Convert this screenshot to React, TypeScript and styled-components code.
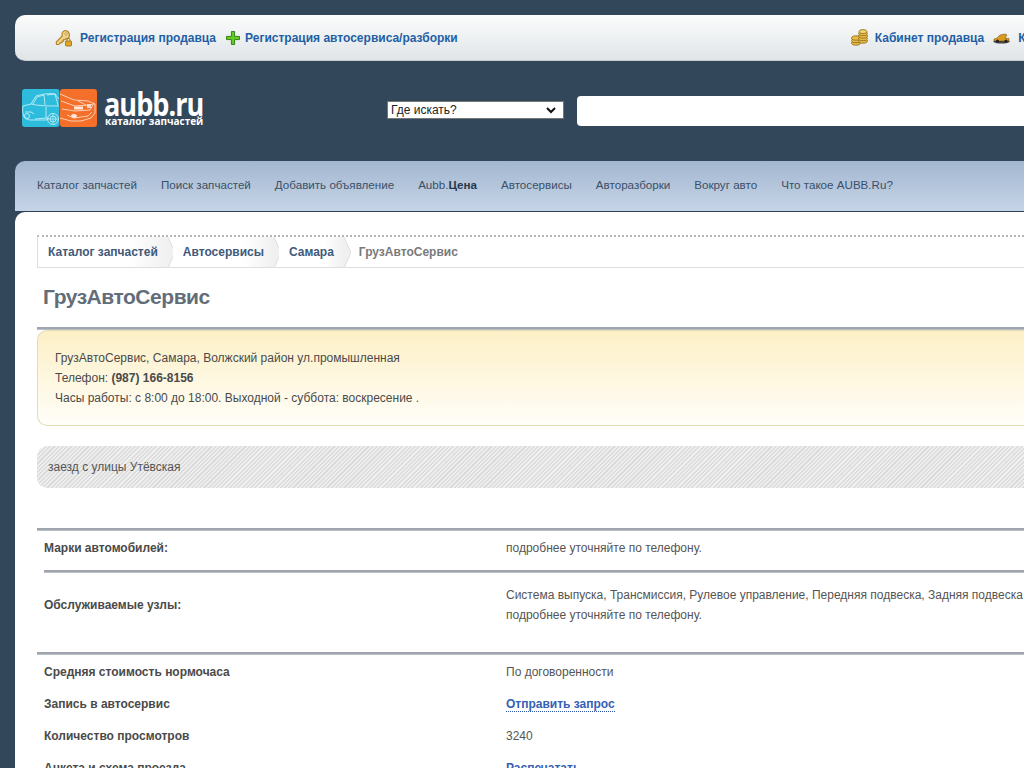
import styled, { createGlobalStyle } from "styled-components";

const Global = createGlobalStyle`
  html, body {
    margin: 0;
    padding: 0;
    height: 768px;
    overflow: hidden;
    background: #33475b;
    font-family: "Liberation Sans", Arial, sans-serif;
    font-size: 12px;
    color: #444;
  }
`;

const ruleBottom = `
  border-bottom: 1px solid #bcc1c8;
  box-shadow: inset 0 -2px 0 #9ea5af;
`;

const Page = styled.div`
  width: 1300px;
  padding-left: 15px;
  padding-top: 15px;
  box-sizing: border-box;
`;

const TopBar = styled.div`
  display: flex;
  align-items: center;
  height: 46px;
  box-sizing: border-box;
  padding-left: 40px;
  border-radius: 10px 0 0 10px;
  background: linear-gradient(#fbfcfc, #e1e5e8);
  border-bottom: 1px solid #c9cdd0;
`;

const TopLink = styled.a<{ $ml?: number; $gap?: number }>`
  display: flex;
  align-items: center;
  gap: ${(p) => p.$gap ?? 7}px;
  margin-left: ${(p) => p.$ml ?? 0}px;
  color: #1f5fa6;
  font-weight: bold;
  font-size: 12px;
  white-space: nowrap;
`;

const Header = styled.div`
  display: flex;
  align-items: flex-start;
  height: 100px;
`;

const LogoBox = styled.div`
  display: flex;
  align-items: flex-start;
  gap: 8px;
  margin: 28px 0 0 7px;
  width: 365px;
`;

const LogoText = styled.div`
  display: flex;
  flex-direction: column;
  color: #fff;
  font-family: "Open Sans", sans-serif;
  font-weight: 700;
`;

const LogoName = styled.div`
  font-size: 33px;
  line-height: 30px;
  letter-spacing: -1.2px;
  margin-left: -1px;
  transform: scaleX(0.82);
  transform-origin: left;
`;

const LogoSub = styled.div`
  font-size: 10px;
  line-height: 10px;
  margin-top: -3px;
  white-space: nowrap;
`;

const WhereSelect = styled.div`
  display: flex;
  align-items: center;
  justify-content: space-between;
  box-sizing: border-box;
  width: 177px;
  height: 18px;
  margin-top: 40px;
  padding: 0 7px 0 3px;
  background: #fff;
  border: 1px solid #767676;
  color: #222;
  font-size: 12px;
`;

const SearchInput = styled.div`
  width: 600px;
  height: 30px;
  margin: 35px 0 0 13px;
  background: #fff;
  border-radius: 4px;
`;

const Nav = styled.div`
  display: flex;
  align-items: center;
  gap: 24px;
  height: 51px;
  box-sizing: border-box;
  padding: 0 0 3px 22px;
  border-radius: 10px 0 0 0;
  background: linear-gradient(#a3b7d0, #c6d4e7);
  border-bottom: 1px solid #2f4358;
`;

const NavItem = styled.a`
  color: #3a5068;
  font-size: 11.62px;
  white-space: nowrap;
  b {
    color: #24384c;
  }
`;

const Content = styled.div`
  background: #fff;
  border-radius: 10px 0 0 0;
  padding: 23px 0 40px 22px;
`;

const Crumbs = styled.div`
  display: flex;
  align-items: stretch;
  height: 33px;
  box-sizing: border-box;
  border-top: 2px dotted #b5b5b5;
  border-bottom: 1px solid #dedede;
  border-left: 1px solid #dedede;
`;

const Crumb = styled.a<{ $current?: boolean }>`
  position: relative;
  display: flex;
  align-items: center;
  padding: 0 10px;
  margin-right: 5px;
  font-weight: bold;
  color: ${(p) => (p.$current ? "#7a7a7a" : "#41597a")};
  white-space: nowrap;
  background: ${(p) =>
    p.$current ? "none" : "linear-gradient(90deg, #fff 70%, #f0f0f0)"};
`;

const CrumbArrow = styled.svg`
  position: absolute;
  right: -7px;
  top: 0;
  width: 7px;
  height: 31px;
`;

const Title = styled.h1`
  margin: 0;
  padding: 17px 0 0 6px;
  height: 62px;
  box-sizing: border-box;
  font-size: 21px;
  line-height: 24px;
  letter-spacing: -0.47px;
  font-weight: bold;
  color: #636d79;
  ${ruleBottom}
`;

const Notice = styled.div`
  height: 96px;
  box-sizing: border-box;
  padding: 17px 17px 0;
  border: 1px solid #e2dcb6;
  border-right: none;
  border-radius: 10px 0 0 10px;
  background: linear-gradient(#fdf0c6, #fffef9);
  line-height: 20px;
  color: #4a4a4a;
`;

const Striped = styled.div`
  display: flex;
  align-items: center;
  margin-top: 20px;
  height: 42px;
  padding-left: 11px;
  border-radius: 10px 0 0 10px;
  color: #555;
  background: repeating-linear-gradient(
    135deg,
    #dcdcdc 0,
    #dcdcdc 1.5px,
    #efefef 1.5px,
    #efefef 3px
  );
`;

const Table = styled.div`
  margin-top: 40px;
  padding-top: 1px;
  border-top: 2px solid #9ea5af;
  box-shadow: inset 0 1px 0 #bcc1c8;
`;

const Row = styled.div<{
  $h: number;
  $rule?: "full" | "inner";
  $pt?: number;
  $pb?: number;
}>`
  display: grid;
  grid-template-columns: 462px 1fr;
  align-items: center;
  box-sizing: border-box;
  height: ${(p) => p.$h}px;
  padding-top: ${(p) => p.$pt ?? 0}px;
  padding-bottom: ${(p) => p.$pb ?? 0}px;
  margin-left: ${(p) => (p.$rule === "inner" ? 7 : 0)}px;
  padding-left: ${(p) => (p.$rule === "inner" ? 0 : 7)}px;
  ${(p) => (p.$rule ? ruleBottom : "")}
`;

const Label = styled.div`
  font-weight: bold;
  color: #4a4a4a;
`;

const Value = styled.div`
  line-height: 20px;
  color: #555;
  white-space: nowrap;
`;

const DottedLink = styled.a`
  color: #3560b4;
  font-weight: bold;
  border-bottom: 1px dotted #2c55a8;
`;

const PlainLink = styled.a`
  color: #3560b4;
  font-weight: bold;
`;

const KeyIcon = () => (
  <svg width="18" height="18" viewBox="0 0 18 18">
    <path d="M10 1.5a4.5 4.5 0 0 1 3 7.8l-1 .7-1-.5-1.2 1.2H8.5v1.5H7v1.5H5.5L4 15.5H1.5l-.2-2.5 6-6A4.5 4.5 0 0 1 10 1.5Z" fill="#f3d58a" stroke="#b8862c" strokeWidth="1.2" />
    <circle cx="11" cy="5" r="1.2" fill="#fff" stroke="#b8862c" strokeWidth=".8" />
    <rect x="10.5" y="12" width="6" height="5" rx=".8" fill="#e0a81f" stroke="#8f6a14" strokeWidth=".8" />
    <path d="M12 12v-1.2a1.5 1.5 0 0 1 3 0V12" fill="none" stroke="#8f6a14" strokeWidth=".9" />
  </svg>
);

const PlusIcon = () => (
  <svg width="14" height="14" viewBox="0 0 15 15">
    <path d="M5.8.5h3.4v5.3h5.3v3.4H9.2v5.3H5.8V9.2H.5V5.8h5.3Z" fill="#62cc22" stroke="#2f7d16" strokeWidth="1" />
  </svg>
);

const CoinsIcon = () => (
  <svg width="17" height="17" viewBox="0 0 17 17">
    <g fill="#e8bb45" stroke="#8c6a1c" strokeWidth=".8">
      <ellipse cx="5" cy="14" rx="4.4" ry="2.2" />
      <ellipse cx="5" cy="11.5" rx="4.4" ry="2.2" />
      <ellipse cx="5" cy="9" rx="4.4" ry="2.2" />
      <ellipse cx="12" cy="12" rx="4.4" ry="2.2" />
      <ellipse cx="12" cy="9.5" rx="4.4" ry="2.2" />
      <ellipse cx="12" cy="7" rx="4.4" ry="2.2" />
      <ellipse cx="12" cy="4.5" rx="4.4" ry="2.2" />
      <ellipse cx="12" cy="2.6" rx="4" ry="2" fill="#f5d675" />
    </g>
  </svg>
);

const CarIcon = () => (
  <svg width="17" height="12" viewBox="0 0 17 12">
    <ellipse cx="8.5" cy="9.5" rx="8.2" ry="2" fill="#444" />
    <path d="M1 7 4 6l3-3 5-1 2 1-2 3 4 .5V9H1Z" fill="#d99a1f" stroke="#6a4a10" strokeWidth=".5" />
    <circle cx="4.5" cy="9" r="1.5" fill="#222" />
    <circle cx="13" cy="9" r="1.5" fill="#222" />
  </svg>
);

const Logo = () => (
  <svg width="75" height="38" viewBox="0 0 75 38">
    <rect x="0" y="0" width="37.5" height="38" rx="3" fill="#2ebcdc" />
    <rect x="38" y="0" width="37" height="38" rx="3" fill="#f4702a" />
    <g fill="none" stroke="#d5f2f9" strokeWidth=".8">
      <path d="M1 17 9 15l5-8c6-2 14-3 19-2l4 5" />
      <path d="M9 15c8 2 18 2 28 2" />
      <path d="M11 15l4-7 7-2 1 10M25 6l8-1 3 11" />
      <path d="M1 17c-1 4 0 8 1 11 2 2 4 3 7 3h15l3-2" />
      <path d="M3 23h6l3 2M13 30l12-1M24 18v11" />
      <circle cx="5" cy="27" r="2.5" />
      <circle cx="31" cy="30" r="5.5" />
      <circle cx="31" cy="30" r="3" />
      <path d="M31 25v10M26 30h10" strokeWidth=".6" />
    </g>
    <g fill="none" stroke="#ffe6d6" strokeWidth=".8">
      <path d="M38 5 52 11l14 1 7 3v9l-4 5-10 3H49l-11-3" />
      <path d="M39 12l14 5 14-1 5-1M40 20l13 2 15-1 3-5" />
      <path d="M45 26l7 3 14-2 4-4" />
      <path d="M56 12l8 4" />
      <ellipse cx="52" cy="27" rx="2.6" ry="1.7" fill="#ffe6d6" />
    </g>
    <rect x="52" y="17.5" width="9" height="3" fill="#ffe6d6" />
    <rect x="65" y="15" width="4" height="4" fill="#ffe6d6" opacity=".85" />
  </svg>
);

const CrumbTip = () => (
  <CrumbArrow viewBox="0 0 7 31">
    <path d="M0 0 7 15.5 0 31Z" fill="#f0f0f0" />
    <path d="M0 0 7 15.5 0 31" fill="none" stroke="#dedede" />
  </CrumbArrow>
);

const navItems = [
  "Каталог запчастей",
  "Поиск запчастей",
  "Добавить объявление",
];
const navItemsAfter = [
  "Автосервисы",
  "Авторазборки",
  "Вокруг авто",
  "Что такое AUBB.Ru?",
];

export default function App() {
  return (
    <>
      <Global />
      <Page>
        <TopBar>
          <TopLink>
            <KeyIcon />
            Регистрация продавца
          </TopLink>
          <TopLink $ml={10} $gap={5}>
            <PlusIcon />
            Регистрация автосервиса/разборки
          </TopLink>
          <TopLink $ml={393}>
            <CoinsIcon />
            Кабинет продавца
          </TopLink>
          <TopLink $ml={9} $gap={8}>
            <CarIcon />
            Кабинет автосервиса
          </TopLink>
        </TopBar>
        <Header>
          <LogoBox>
            <Logo />
            <LogoText>
              <LogoName>aubb.ru</LogoName>
              <LogoSub>каталог запчастей</LogoSub>
            </LogoText>
          </LogoBox>
          <WhereSelect>
            Где искать?
            <svg width="10" height="7" viewBox="0 0 10 7">
              <path d="M1 1l4 4 4-4" fill="none" stroke="#111" strokeWidth="2" />
            </svg>
          </WhereSelect>
          <SearchInput />
        </Header>
        <Nav>
          {navItems.map((n) => (
            <NavItem key={n}>{n}</NavItem>
          ))}
          <NavItem>
            Aubb.<b>Цена</b>
          </NavItem>
          {navItemsAfter.map((n) => (
            <NavItem key={n}>{n}</NavItem>
          ))}
        </Nav>
        <Content>
          <Crumbs>
            <Crumb>
              Каталог запчастей
              <CrumbTip />
            </Crumb>
            <Crumb>
              Автосервисы
              <CrumbTip />
            </Crumb>
            <Crumb>
              Самара
              <CrumbTip />
            </Crumb>
            <Crumb $current>ГрузАвтоСервис</Crumb>
          </Crumbs>
          <Title>ГрузАвтоСервис</Title>
          <Notice>
            ГрузАвтоСервис, Самара, Волжский район ул.промышленная
            <br />
            Телефон: <b>(987) 166-8156</b>
            <br />
            Часы работы: с 8:00 до 18:00. Выходной - суббота: воскресение .
          </Notice>
          <Striped>заезд с улицы Утёвская</Striped>
          <Table>
            <Row $h={42} $rule="inner" $pb={7}>
              <Label>Марки автомобилей:</Label>
              <Value>подробнее уточняйте по телефону.</Value>
            </Row>
            <Row $h={82} $rule="full" $pb={17}>
              <Label>Обслуживаемые узлы:</Label>
              <Value>
                Система выпуска, Трансмиссия, Рулевое управление, Передняя
                подвеска, Задняя подвеска
                <br />
                подробнее уточняйте по телефону.
              </Value>
            </Row>
            <Row $h={33} $pt={1}>
              <Label>Средняя стоимость нормочаса</Label>
              <Value>По договоренности</Value>
            </Row>
            <Row $h={32}>
              <Label>Запись в автосервис</Label>
              <Value>
                <DottedLink>Отправить запрос</DottedLink>
              </Value>
            </Row>
            <Row $h={32}>
              <Label>Количество просмотров</Label>
              <Value>3240</Value>
            </Row>
            <Row $h={32}>
              <Label>Анкета и схема проезда</Label>
              <Value>
                <PlainLink>Распечатать</PlainLink>
              </Value>
            </Row>
          </Table>
        </Content>
      </Page>
    </>
  );
}
